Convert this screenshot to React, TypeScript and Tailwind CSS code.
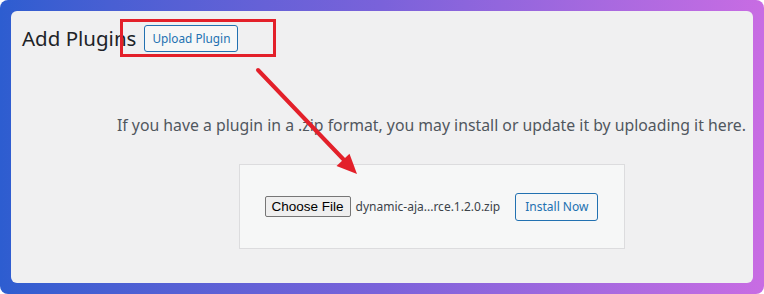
export default function App() {
  return (
    <div className="h-[294px] w-[764px] rounded-[8px] bg-gradient-to-r from-[#2d5dd0] via-[#7a62da] to-[#c86ce3] p-[11px]">
      <div className="relative h-[272px] w-[742px] rounded-[6px] bg-[#f0f0f1] font-['Noto_Sans',sans-serif]">
        <div className="flex items-center pl-[11px] pt-[14px]">
          <h1 className="text-[20.5px] leading-[27px] text-[#1d2327]">Add Plugins</h1>
          <button className="ml-[8px] h-[27px] rounded-[3px] border border-[#2271b1] bg-[#f6f7f7] px-[7px] text-[11.8px] text-[#2271b1]">
            Upload Plugin
          </button>
        </div>

        <div className="ml-[99px] mt-[63px] flex flex-col items-center">
          <p className="whitespace-nowrap text-[15.8px] leading-[20px] text-[#50575e]">
            If you have a plugin in a .zip format, you may install or update it by uploading it here.
          </p>
          <div className="mt-[29px] flex h-[85px] w-[386px] items-center justify-center border border-[#dcdcde] bg-[#f6f7f7]">
            <button className="h-[21px] rounded-[2px] border border-[#767676] bg-[#efefef] px-[6px] font-['Liberation_Sans',sans-serif] text-[13.5px] leading-[19px] text-black">
              Choose File
            </button>
            <span className="ml-[5px] text-[12px] text-[#3c434a]">dynamic-aja...rce.1.2.0.zip</span>
            <button className="ml-[15px] h-[28px] rounded-[3px] border border-[#2271b1] bg-[#f6f7f7] px-[9px] text-[12px] text-[#2271b1]">
              Install Now
            </button>
          </div>
        </div>

        <div className="pointer-events-none absolute left-[109px] top-[8px] h-[38px] w-[156px] border-[3px] border-[#e3202a]" />

        <svg className="pointer-events-none absolute left-0 top-0" width="742" height="272" viewBox="11 11 742 272">
          <line x1="258" y1="70" x2="345" y2="161" stroke="#e3202a" strokeWidth="4" strokeLinecap="round" />
          <polygon points="357,174 336.5,166 349.5,153.8" fill="#e3202a" />
        </svg>
      </div>
    </div>
  );
}
